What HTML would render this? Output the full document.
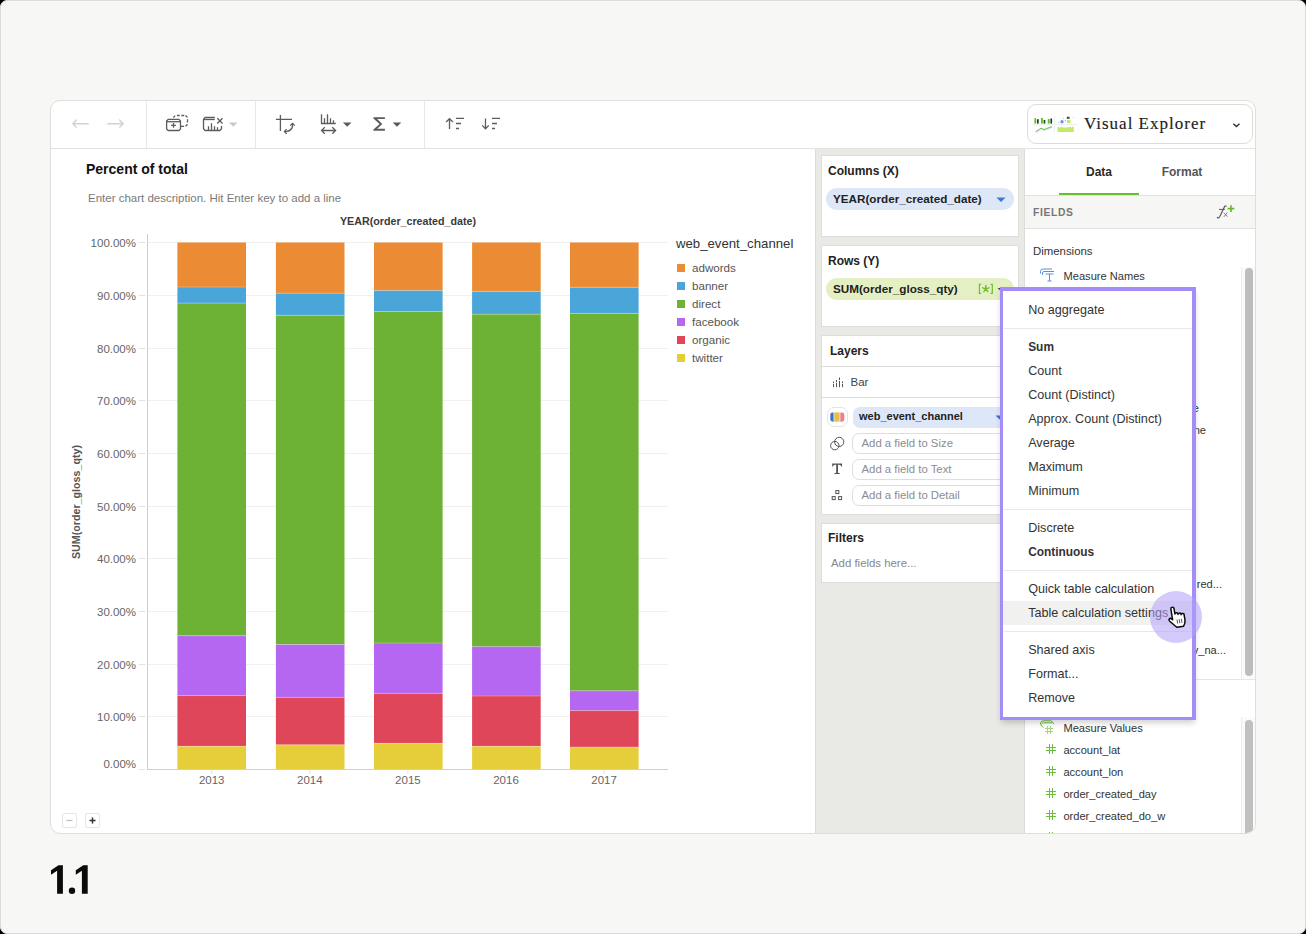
<!DOCTYPE html>
<html><head><meta charset="utf-8">
<style>
*{box-sizing:border-box;margin:0;padding:0}
html,body{width:1306px;height:934px;overflow:hidden;background:#000}
body{font-family:"Liberation Sans",sans-serif;color:#333;position:relative}
.abs{position:absolute}
.t{position:absolute;white-space:nowrap;line-height:1}
svg{position:absolute;overflow:visible}
</style></head><body>

<div class="abs" style="left:0px;top:0px;width:1306px;height:934px;background:#f7f7f5;border:1px solid #dcdddb;border-radius:7px;"></div>
<div class="abs" style="left:50px;top:100px;width:1206px;height:734px;background:#fff;border:1px solid #dedfdc;border-radius:10px;"></div>
<div class="abs" style="left:815px;top:149px;width:210px;height:684px;background:#e9eae6;border-left:1px solid #dcddd9;border-right:1px solid #dcddd9;"></div>
<div class="abs" style="left:51px;top:148px;width:1204px;height:1px;background:#e3e4e1;"></div>
<div class="abs" style="left:146px;top:101px;width:1px;height:47px;background:#e8e9e6;"></div>
<div class="abs" style="left:255px;top:101px;width:1px;height:47px;background:#e8e9e6;"></div>
<div class="abs" style="left:424px;top:101px;width:1px;height:47px;background:#e8e9e6;"></div>
<svg style="left:0;top:0" width="1306" height="934" viewBox="0 0 1306 934"><path d="M71.8 123.7L76.7 118.8V121L74.6 123H88.7V124.4H74.6L76.7 126.4V128.6Z" fill="#d2d2d2"/><path d="M124.2 123.7L119.3 118.8V121L121.4 123H107.3V124.4H121.4L119.3 126.4V128.6Z" fill="#d2d2d2"/><g stroke="#5c5c5c" stroke-width="1.3" fill="none"><path d="M168.2 119.4H178.9L180.5 121.1V128.9L178.9 130.5H168.2L166.6 128.9V121.1Z"/><path d="M166.6 121.7H180.5"/><path d="M171.1 125.4H175.9M173.5 123V127.8"/><path d="M173.4 117.6L175.1 115.6M176.9 115.5H179.7M181.4 115.5H184.2M185.5 115.5L187.5 117.4M187.5 119.2V122.4M187.5 124.3L185.6 126.3M184.1 126.4H180.5"/><path d="M214.8 117.5H205.2L203.5 119.2V128.8L205.2 130.5H219.8L221.5 128.8V126"/><path d="M203.5 119.5H214.8"/><path d="M208.5 130.5V126.2M211.5 130.5V123.3M214.5 130.5V126.2M217.5 130.5V127.3"/><path d="M217.3 118.3L222.5 123.5M222.5 118.3L217.3 123.5"/></g><path d="M228.8 122.4H237.5L233.15 126.8Z" fill="#c8cac6"/><g stroke="#5c5c5c" stroke-width="1.3" fill="none"><path d="M280.4 115V131M275.9 119.3H292"/><path d="M285 131.4H286.5Q291.5 131 292.5 126.5V124"/><path d="M286.6 129.1L284.5 131.4L286.6 133.7"/><path d="M290.2 125.6L292.5 123.3L294.8 125.6"/></g><g stroke="#5c5c5c" stroke-width="1.3" fill="none"><path d="M321.5 114.3V123.5H335.8M324.5 123.5V118.2M327.5 123.5V114.3M330.5 123.5V118.2M333.5 123.5V120.2"/><path d="M321.6 130.5H335.5M324.8 127.3L321.5 130.5L324.8 133.7M332.3 127.3L335.6 130.5L332.3 133.7"/></g><path d="M342.9 122.5H351.5L347.2 126.8Z" fill="#5c5c5c"/><path d="M373.4 117.2H384.9V119.1H377.2L382.3 123.9L377.2 128.8H384.9V130.7H373.4V129.6L379.6 123.9L373.4 118.4Z" fill="#5c5c5c"/><path d="M392.7 122.5H401.3L397 126.8Z" fill="#5c5c5c"/><g stroke="#5c5c5c" stroke-width="1.3" fill="none"><path d="M449.5 129V118.8M446.2 122L449.5 118.6L452.8 122"/><path d="M456 118.4H464M456 123.5H461M456 128.5H459"/><path d="M485.5 118.4V128.6M482.2 125.4L485.5 128.8L488.8 125.4"/><path d="M492 118.4H500M492 123.5H497M492 128.5H495"/></g></svg>
<div class="abs" style="left:1027px;top:104px;width:226px;height:40px;background:#fff;border:1px solid #dcddd9;border-radius:9px;"></div>
<svg style="left:0;top:0" width="1306" height="934" viewBox="0 0 1306 934"><path d="M1032 124.7H1054M1055 124.7H1077" stroke="#ececec" stroke-width="0.9"/><path d="M1054.5 116V132" stroke="#ececec" stroke-width="0.9"/><g fill="#62bb1e"><rect x="1034.4" y="118.2" width="1.8" height="5.4"/><rect x="1041" y="118" width="1.8" height="5.6"/><rect x="1047.8" y="119" width="1.8" height="4.6"/></g><g fill="#0f4a1e"><rect x="1037" y="119.2" width="1.7" height="4.4"/><rect x="1043.6" y="120" width="1.7" height="3.6"/><rect x="1050.4" y="118.5" width="1.7" height="5.1"/></g><path d="M1035.8 131.8L1038 130.5L1041 128.3L1043.5 129.5L1046 129L1048 128L1052 126.3" stroke="#c8d8f8" stroke-width="1" fill="none" transform="translate(0.6 0.8)"/><path d="M1035.5 131.7L1038 130.2L1041 128.2L1044 129.5L1046.5 128.6L1049 127.7L1051.8 126.5" stroke="#5cb82a" stroke-width="0.9" fill="none"/><circle cx="1062" cy="121.7" r="1.7" fill="#6b95ee"/><circle cx="1058.6" cy="122.6" r="0.6" fill="#a9c2f5"/><circle cx="1063.5" cy="118.5" r="0.6" fill="#a9c2f5"/><circle cx="1065.5" cy="120.4" r="0.6" fill="#8fb0f0"/><circle cx="1073.5" cy="117.3" r="0.6" fill="#bccff7"/><rect x="1066.8" y="116.8" width="2.8" height="2" fill="#1d5b22"/><rect x="1067" y="120" width="3.4" height="3" rx="0.6" fill="#c2e86a"/><path d="M1057.5 132V127.5L1058.5 126.6L1059.3 128L1060 126.8L1061 127.5L1062 126.5L1063 128L1064 127L1065 128L1066 127L1067 127.8L1068 126.7L1069 127.6L1070.5 126.6L1071.5 127.7L1072.5 126.6L1073.8 127V132Z" fill="#c3ea66"/><path d="M1233.3 123.8L1236.4 126.6L1239.5 123.8" stroke="#333" stroke-width="1.5" fill="none"/></svg>
<div class="t" style="left:1084px;top:115.16px;font-size:17px;color:#222;font-weight:400;font-family:'Liberation Serif',serif;letter-spacing:1px;-webkit-text-stroke:0.15px #222;">Visual Explorer</div>
<div class="t" style="left:86px;top:161.72px;font-size:14px;color:#111;font-weight:700;font-family:'Liberation Sans',sans-serif;">Percent of total</div>
<div class="t" style="left:88px;top:193.02px;font-size:11.5px;color:#7a7a7a;font-weight:400;font-family:'Liberation Sans',sans-serif;">Enter chart description. Hit Enter key to add a line</div>
<div class="t" style="left:408px;transform:translateX(-50%);top:216.24px;font-size:10.7px;color:#3a3a3a;font-weight:700;font-family:'Liberation Sans',sans-serif;">YEAR(order_created_date)</div>
<svg style="left:0;top:0" width="1306" height="934" viewBox="0 0 1306 934"><path d="M139 769.5H145" stroke="#e3e3e3" stroke-width="1"/><path d="M148 716.5H668" stroke="#f0f0f0" stroke-width="1"/><path d="M139 716.5H145" stroke="#e3e3e3" stroke-width="1"/><path d="M148 664.5H668" stroke="#f0f0f0" stroke-width="1"/><path d="M139 664.5H145" stroke="#e3e3e3" stroke-width="1"/><path d="M148 611.5H668" stroke="#f0f0f0" stroke-width="1"/><path d="M139 611.5H145" stroke="#e3e3e3" stroke-width="1"/><path d="M148 558.5H668" stroke="#f0f0f0" stroke-width="1"/><path d="M139 558.5H145" stroke="#e3e3e3" stroke-width="1"/><path d="M148 506.5H668" stroke="#f0f0f0" stroke-width="1"/><path d="M139 506.5H145" stroke="#e3e3e3" stroke-width="1"/><path d="M148 453.5H668" stroke="#f0f0f0" stroke-width="1"/><path d="M139 453.5H145" stroke="#e3e3e3" stroke-width="1"/><path d="M148 400.5H668" stroke="#f0f0f0" stroke-width="1"/><path d="M139 400.5H145" stroke="#e3e3e3" stroke-width="1"/><path d="M148 348.5H668" stroke="#f0f0f0" stroke-width="1"/><path d="M139 348.5H145" stroke="#e3e3e3" stroke-width="1"/><path d="M148 295.5H668" stroke="#f0f0f0" stroke-width="1"/><path d="M139 295.5H145" stroke="#e3e3e3" stroke-width="1"/><path d="M148 242.5H668" stroke="#f0f0f0" stroke-width="1"/><path d="M139 242.5H145" stroke="#e3e3e3" stroke-width="1"/><rect x="177.4" y="242.5" width="68.6" height="44.5" fill="#eb8c34"/><rect x="177.4" y="287.0" width="68.6" height="16.100000000000023" fill="#4aa5d8"/><rect x="177.4" y="303.1" width="68.6" height="332.6" fill="#6db135"/><rect x="177.4" y="635.7" width="68.6" height="59.89999999999998" fill="#b567f1"/><rect x="177.4" y="695.6" width="68.6" height="50.69999999999993" fill="#df4659"/><rect x="177.4" y="746.3" width="68.6" height="22.700000000000045" fill="#e6ce3a"/><path d="M177.4 287.0h68.6" stroke="rgba(255,255,255,0.35)" stroke-width="0.8"/><path d="M177.4 303.1h68.6" stroke="rgba(255,255,255,0.35)" stroke-width="0.8"/><path d="M177.4 635.7h68.6" stroke="rgba(255,255,255,0.35)" stroke-width="0.8"/><path d="M177.4 695.6h68.6" stroke="rgba(255,255,255,0.35)" stroke-width="0.8"/><path d="M177.4 746.3h68.6" stroke="rgba(255,255,255,0.35)" stroke-width="0.8"/><rect x="275.9" y="242.5" width="68.6" height="50.69999999999999" fill="#eb8c34"/><rect x="275.9" y="293.2" width="68.6" height="22.100000000000023" fill="#4aa5d8"/><rect x="275.9" y="315.3" width="68.6" height="329.2" fill="#6db135"/><rect x="275.9" y="644.5" width="68.6" height="52.89999999999998" fill="#b567f1"/><rect x="275.9" y="697.4" width="68.6" height="47.39999999999998" fill="#df4659"/><rect x="275.9" y="744.8" width="68.6" height="24.200000000000045" fill="#e6ce3a"/><path d="M275.9 293.2h68.6" stroke="rgba(255,255,255,0.35)" stroke-width="0.8"/><path d="M275.9 315.3h68.6" stroke="rgba(255,255,255,0.35)" stroke-width="0.8"/><path d="M275.9 644.5h68.6" stroke="rgba(255,255,255,0.35)" stroke-width="0.8"/><path d="M275.9 697.4h68.6" stroke="rgba(255,255,255,0.35)" stroke-width="0.8"/><path d="M275.9 744.8h68.6" stroke="rgba(255,255,255,0.35)" stroke-width="0.8"/><rect x="374.0" y="242.5" width="68.6" height="48.10000000000002" fill="#eb8c34"/><rect x="374.0" y="290.6" width="68.6" height="21.0" fill="#4aa5d8"/><rect x="374.0" y="311.6" width="68.6" height="331.4" fill="#6db135"/><rect x="374.0" y="643.0" width="68.6" height="50.39999999999998" fill="#b567f1"/><rect x="374.0" y="693.4" width="68.6" height="49.89999999999998" fill="#df4659"/><rect x="374.0" y="743.3" width="68.6" height="25.700000000000045" fill="#e6ce3a"/><path d="M374.0 290.6h68.6" stroke="rgba(255,255,255,0.35)" stroke-width="0.8"/><path d="M374.0 311.6h68.6" stroke="rgba(255,255,255,0.35)" stroke-width="0.8"/><path d="M374.0 643.0h68.6" stroke="rgba(255,255,255,0.35)" stroke-width="0.8"/><path d="M374.0 693.4h68.6" stroke="rgba(255,255,255,0.35)" stroke-width="0.8"/><path d="M374.0 743.3h68.6" stroke="rgba(255,255,255,0.35)" stroke-width="0.8"/><rect x="472.1" y="242.5" width="68.6" height="48.89999999999998" fill="#eb8c34"/><rect x="472.1" y="291.4" width="68.6" height="22.80000000000001" fill="#4aa5d8"/><rect x="472.1" y="314.2" width="68.6" height="332.50000000000006" fill="#6db135"/><rect x="472.1" y="646.7" width="68.6" height="49.299999999999955" fill="#b567f1"/><rect x="472.1" y="696.0" width="68.6" height="50.299999999999955" fill="#df4659"/><rect x="472.1" y="746.3" width="68.6" height="22.700000000000045" fill="#e6ce3a"/><path d="M472.1 291.4h68.6" stroke="rgba(255,255,255,0.35)" stroke-width="0.8"/><path d="M472.1 314.2h68.6" stroke="rgba(255,255,255,0.35)" stroke-width="0.8"/><path d="M472.1 646.7h68.6" stroke="rgba(255,255,255,0.35)" stroke-width="0.8"/><path d="M472.1 696.0h68.6" stroke="rgba(255,255,255,0.35)" stroke-width="0.8"/><path d="M472.1 746.3h68.6" stroke="rgba(255,255,255,0.35)" stroke-width="0.8"/><rect x="570.0" y="242.5" width="68.6" height="44.80000000000001" fill="#eb8c34"/><rect x="570.0" y="287.3" width="68.6" height="26.099999999999966" fill="#4aa5d8"/><rect x="570.0" y="313.4" width="68.6" height="377.4" fill="#6db135"/><rect x="570.0" y="690.8" width="68.6" height="19.800000000000068" fill="#b567f1"/><rect x="570.0" y="710.6" width="68.6" height="36.39999999999998" fill="#df4659"/><rect x="570.0" y="747.0" width="68.6" height="22.0" fill="#e6ce3a"/><path d="M570.0 287.3h68.6" stroke="rgba(255,255,255,0.35)" stroke-width="0.8"/><path d="M570.0 313.4h68.6" stroke="rgba(255,255,255,0.35)" stroke-width="0.8"/><path d="M570.0 690.8h68.6" stroke="rgba(255,255,255,0.35)" stroke-width="0.8"/><path d="M570.0 710.6h68.6" stroke="rgba(255,255,255,0.35)" stroke-width="0.8"/><path d="M570.0 747.0h68.6" stroke="rgba(255,255,255,0.35)" stroke-width="0.8"/><path d="M147.5 234V769.5" stroke="#cfcfcf" stroke-width="1"/><path d="M147 769.5H668" stroke="#cfcfcf" stroke-width="1"/><path d="M211.7 770V774" stroke="#e3e3e3" stroke-width="1"/><path d="M309.8 770V774" stroke="#e3e3e3" stroke-width="1"/><path d="M407.9 770V774" stroke="#e3e3e3" stroke-width="1"/><path d="M506.0 770V774" stroke="#e3e3e3" stroke-width="1"/><path d="M604.1 770V774" stroke="#e3e3e3" stroke-width="1"/><rect x="677" y="264" width="8" height="8" fill="#eb8c34"/><rect x="677" y="282" width="8" height="8" fill="#4aa5d8"/><rect x="677" y="300" width="8" height="8" fill="#6db135"/><rect x="677" y="318" width="8" height="8" fill="#b567f1"/><rect x="677" y="336" width="8" height="8" fill="#df4659"/><rect x="677" y="354" width="8" height="8" fill="#e6ce3a"/></svg>
<div class="t" style="right:1170px;top:759.02px;font-size:11.5px;color:#666;font-weight:400;font-family:'Liberation Sans',sans-serif;">0.00%</div>
<div class="t" style="right:1170px;top:712.17px;font-size:11.5px;color:#666;font-weight:400;font-family:'Liberation Sans',sans-serif;">10.00%</div>
<div class="t" style="right:1170px;top:659.52px;font-size:11.5px;color:#666;font-weight:400;font-family:'Liberation Sans',sans-serif;">20.00%</div>
<div class="t" style="right:1170px;top:606.87px;font-size:11.5px;color:#666;font-weight:400;font-family:'Liberation Sans',sans-serif;">30.00%</div>
<div class="t" style="right:1170px;top:554.22px;font-size:11.5px;color:#666;font-weight:400;font-family:'Liberation Sans',sans-serif;">40.00%</div>
<div class="t" style="right:1170px;top:501.57px;font-size:11.5px;color:#666;font-weight:400;font-family:'Liberation Sans',sans-serif;">50.00%</div>
<div class="t" style="right:1170px;top:448.92px;font-size:11.5px;color:#666;font-weight:400;font-family:'Liberation Sans',sans-serif;">60.00%</div>
<div class="t" style="right:1170px;top:396.27px;font-size:11.5px;color:#666;font-weight:400;font-family:'Liberation Sans',sans-serif;">70.00%</div>
<div class="t" style="right:1170px;top:343.62px;font-size:11.5px;color:#666;font-weight:400;font-family:'Liberation Sans',sans-serif;">80.00%</div>
<div class="t" style="right:1170px;top:290.97px;font-size:11.5px;color:#666;font-weight:400;font-family:'Liberation Sans',sans-serif;">90.00%</div>
<div class="t" style="right:1170px;top:238.32px;font-size:11.5px;color:#666;font-weight:400;font-family:'Liberation Sans',sans-serif;">100.00%</div>
<div class="t" style="left:211.7px;transform:translateX(-50%);top:775.12px;font-size:11.5px;color:#666;font-weight:400;font-family:'Liberation Sans',sans-serif;">2013</div>
<div class="t" style="left:309.79999999999995px;transform:translateX(-50%);top:775.12px;font-size:11.5px;color:#666;font-weight:400;font-family:'Liberation Sans',sans-serif;">2014</div>
<div class="t" style="left:407.9px;transform:translateX(-50%);top:775.12px;font-size:11.5px;color:#666;font-weight:400;font-family:'Liberation Sans',sans-serif;">2015</div>
<div class="t" style="left:505.99999999999994px;transform:translateX(-50%);top:775.12px;font-size:11.5px;color:#666;font-weight:400;font-family:'Liberation Sans',sans-serif;">2016</div>
<div class="t" style="left:604.0999999999999px;transform:translateX(-50%);top:775.12px;font-size:11.5px;color:#666;font-weight:400;font-family:'Liberation Sans',sans-serif;">2017</div>
<div class="t" style="left:676px;top:236.64px;font-size:13.2px;color:#333;font-weight:400;font-family:'Liberation Sans',sans-serif;">web_event_channel</div>
<div class="t" style="left:692px;top:261.97px;font-size:11.6px;color:#555;font-weight:400;font-family:'Liberation Sans',sans-serif;">adwords</div>
<div class="t" style="left:692px;top:279.97px;font-size:11.6px;color:#555;font-weight:400;font-family:'Liberation Sans',sans-serif;">banner</div>
<div class="t" style="left:692px;top:297.97px;font-size:11.6px;color:#555;font-weight:400;font-family:'Liberation Sans',sans-serif;">direct</div>
<div class="t" style="left:692px;top:315.97px;font-size:11.6px;color:#555;font-weight:400;font-family:'Liberation Sans',sans-serif;">facebook</div>
<div class="t" style="left:692px;top:333.97px;font-size:11.6px;color:#555;font-weight:400;font-family:'Liberation Sans',sans-serif;">organic</div>
<div class="t" style="left:692px;top:351.97px;font-size:11.6px;color:#555;font-weight:400;font-family:'Liberation Sans',sans-serif;">twitter</div>
<div class="t" style="left:76px;top:502px;font-size:10.7px;font-weight:700;color:#555;transform:translate(-50%,-50%) rotate(-90deg)">SUM(order_gloss_qty)</div>
<div class="abs" style="left:62px;top:813px;width:15px;height:15px;background:#fff;border:1px solid #e6e6e6;border-radius:2px;"></div>
<div class="abs" style="left:85px;top:813px;width:15px;height:15px;background:#fff;border:1px solid #e6e6e6;border-radius:2px;"></div>
<svg style="left:0;top:0" width="1306" height="934" viewBox="0 0 1306 934"><path d="M66.5 820.5H72.5" stroke="#bbb" stroke-width="1.2"/><path d="M89.5 820.5H95.5M92.5 817.5V823.5" stroke="#333" stroke-width="1.5"/></svg>
<div class="abs" style="left:821px;top:155px;width:198px;height:82px;background:#fff;border:1px solid #dddeda;"></div>
<div class="t" style="left:828px;top:164.76px;font-size:12px;color:#222;font-weight:700;font-family:'Liberation Sans',sans-serif;">Columns (X)</div>
<div class="abs" style="left:826px;top:188px;width:188px;height:22px;background:#dde7f8;border-radius:11px;"></div>
<div class="t" style="left:833px;top:193.22px;font-size:11.7px;color:#222;font-weight:700;font-family:'Liberation Sans',sans-serif;">YEAR(order_created_date)</div>
<svg style="left:0;top:0" width="1306" height="934" viewBox="0 0 1306 934"><path d="M996.5 197.5H1005.5L1001 202Z" fill="#3a76d8"/></svg>
<div class="abs" style="left:821px;top:245px;width:198px;height:82px;background:#fff;border:1px solid #dddeda;"></div>
<div class="t" style="left:828px;top:254.96px;font-size:12px;color:#222;font-weight:700;font-family:'Liberation Sans',sans-serif;">Rows (Y)</div>
<div class="abs" style="left:826px;top:278px;width:188px;height:22px;background:#e4f0c4;border-radius:11px;"></div>
<div class="t" style="left:833px;top:283.22px;font-size:11.7px;color:#222;font-weight:700;font-family:'Liberation Sans',sans-serif;">SUM(order_gloss_qty)</div>
<svg style="left:0;top:0" width="1306" height="934" viewBox="0 0 1306 934"><g stroke="#6cc02e" fill="none"><path d="M981.2 284.3H979.4V293.4H981.2M990.5 284.3H992.3V293.4H990.5" stroke-width="1.2"/><path d="M985.8 288.9L985.80 285.60M985.8 288.9L988.94 287.88M985.8 288.9L987.74 291.57M985.8 288.9L983.86 291.57M985.8 288.9L982.66 287.88" stroke-width="1.5" stroke-linecap="round"/></g></svg>
<svg style="left:0;top:0" width="1306" height="934" viewBox="0 0 1306 934"><path d="M997.5 288H1003.5L1000.5 291Z" fill="#2d6a2d"/></svg>
<div class="abs" style="left:821px;top:335px;width:198px;height:180px;background:#fff;border:1px solid #dddeda;"></div>
<div class="t" style="left:830px;top:344.56px;font-size:12px;color:#222;font-weight:700;font-family:'Liberation Sans',sans-serif;">Layers</div>
<div class="abs" style="left:822px;top:366px;width:196px;height:1px;background:#dcdcd8;"></div>
<svg style="left:0;top:0" width="1306" height="934" viewBox="0 0 1306 934"><g stroke="#555" stroke-width="1"><path d="M833.5 381.5V387.2M836.5 380V387.2M839.5 377.5V387.2M842.5 381.5V387.2"/></g><g fill="#fff"><rect x="833" y="383" width="1" height="0.8"/><rect x="836" y="382" width="1" height="0.8"/><rect x="839" y="380" width="1" height="0.8"/><rect x="842" y="383" width="1" height="0.8"/></g></svg>
<div class="t" style="left:850.5px;top:376.62px;font-size:11.5px;color:#444;font-weight:400;font-family:'Liberation Sans',sans-serif;">Bar</div>
<div class="abs" style="left:822px;top:397px;width:196px;height:1px;background:#dcdcd8;"></div>
<div class="abs" style="left:826.5px;top:406.5px;width:21px;height:20.5px;background:#fff;border:1px solid #e3e3e3;border-radius:7px;"></div>
<svg style="left:0;top:0" width="1306" height="934" viewBox="0 0 1306 934"><path d="M830.3 414.8a2.4 2.4 0 0 1 2.4-2.4h0.9v9.3h-0.9a2.4 2.4 0 0 1-2.4-2.4z" fill="#3f6fd9"/><rect x="834.3" y="412.4" width="5.3" height="9.3" fill="#e4c04c"/><path d="M840.3 412.4h1.6a2.4 2.4 0 0 1 2.4 2.4v4.5a2.4 2.4 0 0 1-2.4 2.4h-1.6z" fill="#f27a8c"/></svg>
<div class="abs" style="left:852.5px;top:406.5px;width:170px;height:21px;background:#dde7f8;border-radius:7px 0 0 7px;"></div>
<div class="t" style="left:859px;top:411.28px;font-size:11px;color:#222;font-weight:700;font-family:'Liberation Sans',sans-serif;">web_event_channel</div>
<svg style="left:0;top:0" width="1306" height="934" viewBox="0 0 1306 934"><path d="M995.5 415.5H1003.5L999.5 419.5Z" fill="#3a76d8"/></svg>
<div class="abs" style="left:852px;top:432.5px;width:170px;height:21.5px;background:#fff;border:1px solid #dededa;border-radius:7px;"></div>
<div class="t" style="left:861.5px;top:438.00px;font-size:11.35px;color:#8c8c8c;font-weight:400;font-family:'Liberation Sans',sans-serif;">Add a field to Size</div>
<div class="abs" style="left:852px;top:458.5px;width:170px;height:21.5px;background:#fff;border:1px solid #dededa;border-radius:7px;"></div>
<div class="t" style="left:861.5px;top:464.00px;font-size:11.35px;color:#8c8c8c;font-weight:400;font-family:'Liberation Sans',sans-serif;">Add a field to Text</div>
<div class="abs" style="left:852px;top:484.5px;width:170px;height:21.5px;background:#fff;border:1px solid #dededa;border-radius:7px;"></div>
<div class="t" style="left:861.5px;top:490.00px;font-size:11.35px;color:#8c8c8c;font-weight:400;font-family:'Liberation Sans',sans-serif;">Add a field to Detail</div>
<svg style="left:0;top:0" width="1306" height="934" viewBox="0 0 1306 934"><g stroke="#555" stroke-width="1" fill="none"><circle cx="834.8" cy="445.6" r="4.2"/><circle cx="839.2" cy="441.9" r="4.6"/><rect x="835.8" y="490.6" width="3" height="3"/><rect x="832.2" y="496.6" width="3" height="3"/><rect x="838.6" y="496.6" width="3" height="3"/></g><path d="M832.2 463.6H842V466.6H841.2Q841 464.8 839.2 464.8H838V472.8L839.8 473.3V474.1H834.4V473.3L836.2 472.8V464.8H835Q833.2 464.8 833 466.6H832.2Z" fill="#555"/></svg>
<div class="abs" style="left:821px;top:523px;width:198px;height:60px;background:#fff;border:1px solid #dddeda;"></div>
<div class="t" style="left:828px;top:531.96px;font-size:12px;color:#222;font-weight:700;font-family:'Liberation Sans',sans-serif;">Filters</div>
<div class="t" style="left:831px;top:557.67px;font-size:11.4px;color:#888;font-weight:400;font-family:'Liberation Sans',sans-serif;">Add fields here...</div>
<div class="t" style="left:1099px;transform:translateX(-50%);top:166.16px;font-size:12px;color:#2a2a2a;font-weight:700;font-family:'Liberation Sans',sans-serif;">Data</div>
<div class="t" style="left:1182px;transform:translateX(-50%);top:166.16px;font-size:12px;color:#555;font-weight:700;font-family:'Liberation Sans',sans-serif;">Format</div>
<div class="abs" style="left:1059px;top:192.6px;width:80px;height:2.2px;background:#68be2b;"></div>
<div class="abs" style="left:1025px;top:195px;width:230px;height:1px;background:#e2e3e0;"></div>
<div class="abs" style="left:1025px;top:196px;width:230px;height:32px;background:#f6f6f4;"></div>
<div class="abs" style="left:1025px;top:228px;width:230px;height:1px;background:#e2e3e0;"></div>
<div class="t" style="left:1033px;top:207.84px;font-size:10.3px;color:#777;font-weight:700;font-family:'Liberation Sans',sans-serif;letter-spacing:0.65px;">FIELDS</div>
<svg style="left:0;top:0" width="1306" height="934" viewBox="0 0 1306 934"><path d="M1217 217.2Q1218.4 219 1220 216.3L1224.2 207.3Q1225 205.5 1226.6 206.3" stroke="#555" stroke-width="1.15" fill="none"/><path d="M1219 209.4H1224.8" stroke="#555" stroke-width="1"/><path d="M1223.7 212.8L1227.5 216.6M1227.3 212.6L1223.9 216.8" stroke="#777" stroke-width="0.95"/><path d="M1231 205.3V211.9M1227.7 208.6H1234.3" stroke="#62b82a" stroke-width="1.6"/></svg>
<div class="t" style="left:1033px;top:246.07px;font-size:11.4px;color:#333;font-weight:400;font-family:'Liberation Sans',sans-serif;">Dimensions</div>
<div class="abs" style="left:1241px;top:267px;width:14px;height:413px;background:#fafafa;border-left:1px solid #ececec;"></div>
<div class="abs" style="left:1245px;top:268px;width:8px;height:408px;background:#bdbdbd;border-radius:4px;"></div>
<svg style="left:0;top:0" width="1306" height="934" viewBox="0 0 1306 934"><g stroke="#5a8fe6" stroke-width="1" fill="none"><path d="M1040.5 273.5V271.5Q1040.5 269 1043 269H1052M1042.5 275V273Q1042.5 271.5 1044 271.5H1054"/><path d="M1045.5 274H1053.5M1049.5 274V281M1047.5 281H1051.5"/></g></svg>
<div class="t" style="left:1063.5px;top:270.63px;font-size:11.1px;color:#333;font-weight:400;font-family:'Liberation Sans',sans-serif;">Measure Names</div>
<div class="t" style="right:107px;top:403.23px;font-size:11.1px;color:#333;font-weight:400;font-family:'Liberation Sans',sans-serif;">e</div>
<div class="t" style="right:100px;top:425.23px;font-size:11.1px;color:#333;font-weight:400;font-family:'Liberation Sans',sans-serif;">ne</div>
<div class="t" style="right:84px;top:579.23px;font-size:11.1px;color:#333;font-weight:400;font-family:'Liberation Sans',sans-serif;">red...</div>
<div class="t" style="right:80px;top:645.23px;font-size:11.1px;color:#333;font-weight:400;font-family:'Liberation Sans',sans-serif;">v_na...</div>
<div class="abs" style="left:1025px;top:679px;width:216px;height:1px;background:#e6e6e3;"></div>
<div class="abs" style="left:1241px;top:679px;width:14px;height:1px;background:#e6e6e3;"></div>
<div class="abs" style="left:0;top:0;width:1306px;height:934px;clip-path:inset(680px 51px 101px 1025px round 0 0 9px 0)">
<div class="abs" style="left:1241px;top:717px;width:14px;height:117px;background:#fafafa;border-left:1px solid #ececec;"></div>
<div class="abs" style="left:1245px;top:720px;width:8px;height:114px;background:#c0c0c0;border-radius:4px 4px 0 0;"></div>
<svg style="left:0;top:0" width="1306" height="934" viewBox="0 0 1306 934"><path d="M1043.3 727.5Q1040 725 1040.5 723Q1041 720.8 1044 720.8H1050.5Q1052.5 720.8 1053.8 724.2M1041.5 724.2Q1042.5 722.8 1044 722.8H1052" stroke="#6db83a" stroke-width="1" fill="none"/><g stroke="#a6d77c" stroke-width="1" fill="none"><path d="M1047.5 726V734M1050.5 726V734M1045 728.5H1053M1045 731.5H1053"/></g><g stroke="#6cbf3a" stroke-width="1.05" fill="none"><path d="M1049.5 744V754M1052.5 744V754M1046 747.5H1056M1046 750.5H1056"/><path d="M1049.5 766V776M1052.5 766V776M1046 769.5H1056M1046 772.5H1056"/><path d="M1049.5 788V798M1052.5 788V798M1046 791.5H1056M1046 794.5H1056"/><path d="M1049.5 810V820M1052.5 810V820M1046 813.5H1056M1046 816.5H1056"/><path d="M1049.5 832V842M1052.5 832V842M1046 835.5H1056M1046 838.5H1056"/></g></svg>
<div class="t" style="left:1063.4px;top:723.13px;font-size:11.1px;color:#333;font-weight:400;font-family:'Liberation Sans',sans-serif;">Measure Values</div>
<div class="t" style="left:1063.4px;top:745.13px;font-size:11.1px;color:#333;font-weight:400;font-family:'Liberation Sans',sans-serif;">account_lat</div>
<div class="t" style="left:1063.4px;top:767.03px;font-size:11.1px;color:#333;font-weight:400;font-family:'Liberation Sans',sans-serif;">account_lon</div>
<div class="t" style="left:1063.4px;top:788.93px;font-size:11.1px;color:#333;font-weight:400;font-family:'Liberation Sans',sans-serif;">order_created_day</div>
<div class="t" style="left:1063.4px;top:810.83px;font-size:11.1px;color:#333;font-weight:400;font-family:'Liberation Sans',sans-serif;">order_created_do_w</div>
<div class="t" style="left:1063.4px;top:832.73px;font-size:11.1px;color:#333;font-weight:400;font-family:'Liberation Sans',sans-serif;">order_created_x</div>
</div>
<div class="abs" style="left:1000px;top:287px;width:196px;height:433px;background:#fff;border:solid #a48cf9;border-width:4px 4px 3px 3px;box-shadow:0 4px 6px -1px rgba(0,0,0,0.18)"></div>
<div class="abs" style="left:1004px;top:327.8px;width:188px;height:1px;background:#e8e8e6;"></div>
<div class="abs" style="left:1004px;top:509px;width:188px;height:1px;background:#e8e8e6;"></div>
<div class="abs" style="left:1004px;top:570px;width:188px;height:1px;background:#e8e8e6;"></div>
<div class="abs" style="left:1004px;top:631px;width:188px;height:1px;background:#e8e8e6;"></div>
<div class="abs" style="left:1003px;top:601px;width:189px;height:23.6px;background:#f1f2ef;"></div>
<div class="t" style="left:1028.2px;top:303.85px;font-size:12.6px;color:#333;font-weight:400;font-family:'Liberation Sans',sans-serif;">No aggregate</div>
<div class="t" style="left:1028.2px;top:341.91px;font-size:11.9px;color:#333;font-weight:700;font-family:'Liberation Sans',sans-serif;">Sum</div>
<div class="t" style="left:1028.2px;top:364.85px;font-size:12.6px;color:#333;font-weight:400;font-family:'Liberation Sans',sans-serif;">Count</div>
<div class="t" style="left:1028.2px;top:388.85px;font-size:12.6px;color:#333;font-weight:400;font-family:'Liberation Sans',sans-serif;">Count (Distinct)</div>
<div class="t" style="left:1028.2px;top:412.85px;font-size:12.6px;color:#333;font-weight:400;font-family:'Liberation Sans',sans-serif;">Approx. Count (Distinct)</div>
<div class="t" style="left:1028.2px;top:436.85px;font-size:12.6px;color:#333;font-weight:400;font-family:'Liberation Sans',sans-serif;">Average</div>
<div class="t" style="left:1028.2px;top:460.85px;font-size:12.6px;color:#333;font-weight:400;font-family:'Liberation Sans',sans-serif;">Maximum</div>
<div class="t" style="left:1028.2px;top:484.85px;font-size:12.6px;color:#333;font-weight:400;font-family:'Liberation Sans',sans-serif;">Minimum</div>
<div class="t" style="left:1028.2px;top:521.85px;font-size:12.6px;color:#333;font-weight:400;font-family:'Liberation Sans',sans-serif;">Discrete</div>
<div class="t" style="left:1028.2px;top:546.91px;font-size:11.9px;color:#333;font-weight:700;font-family:'Liberation Sans',sans-serif;">Continuous</div>
<div class="t" style="left:1028.2px;top:582.85px;font-size:12.6px;color:#333;font-weight:400;font-family:'Liberation Sans',sans-serif;">Quick table calculation</div>
<div class="t" style="left:1028.2px;top:606.85px;font-size:12.6px;color:#333;font-weight:400;font-family:'Liberation Sans',sans-serif;">Table calculation settings</div>
<div class="t" style="left:1028.2px;top:643.85px;font-size:12.6px;color:#333;font-weight:400;font-family:'Liberation Sans',sans-serif;">Shared axis</div>
<div class="t" style="left:1028.2px;top:667.85px;font-size:12.6px;color:#333;font-weight:400;font-family:'Liberation Sans',sans-serif;">Format...</div>
<div class="t" style="left:1028.2px;top:691.85px;font-size:12.6px;color:#333;font-weight:400;font-family:'Liberation Sans',sans-serif;">Remove</div>
<div class="abs" style="left:1150px;top:591px;width:52px;height:52px;border-radius:50%;background:rgba(176,160,250,0.55)"></div>
<svg style="left:0;top:0" width="1306" height="934" viewBox="0 0 1306 934"><g transform="rotate(-9 1177 617)"><path d="M1172.2 608.2C1172.2 606.2 1175.4 606.2 1175.4 608.2V613.8C1175.4 612.3 1178.4 612.3 1178.4 613.8V614.6C1178.4 613.2 1181.4 613.2 1181.4 614.6V615.4C1181.4 614 1184.4 614 1184.4 615.4V621.2C1184.4 623.8 1183.2 625.8 1182 627.2H1175.4C1174 625.8 1171.4 622.6 1169 619.8C1167.8 618.3 1169.6 616.5 1171 617.8L1172.2 619Z" fill="#fff" stroke="#0a0a0a" stroke-width="1.5" stroke-linejoin="round"/><path d="M1176.6 619.5V623.6M1178.8 619.5V623.6M1181 619.5V623.6" stroke="#555" stroke-width="0.9"/></g></svg>
<svg style="left:0;top:0" width="1306" height="934" viewBox="0 0 1306 934"><path d="M51 870.3L58.5 865.2H62.9V893.8H57.1V870.8L51 874.8Z" fill="#0a0a0a"/><path d="M75.8 870.3L83.3 865.2H87.7V893.8H81.9V870.8L75.8 874.8Z" fill="#0a0a0a"/><circle cx="72" cy="890.7" r="3.2" fill="#0a0a0a"/></svg>
</body></html>
